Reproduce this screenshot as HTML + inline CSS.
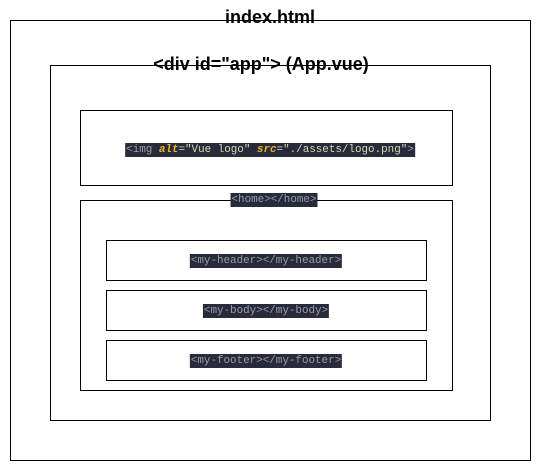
<!DOCTYPE html>
<html><head><meta charset="utf-8"><style>
body{margin:0;width:545px;height:471px;background:#fff;position:relative;overflow:hidden}
.b{position:absolute;border:1px solid #000;box-sizing:border-box}
.t{position:absolute;font:bold 18px "Liberation Sans",sans-serif;color:#000;white-space:nowrap;transform:translateX(-50%)}
.c{position:absolute;font:10.9px/14px "Liberation Mono",monospace;background:#282b3a;color:#9a9ca6;white-space:nowrap;transform:translateX(-50%);padding:0 1px}
.y{color:#e6b422;font-style:italic;font-weight:bold}.g{color:#d8d8b8}.w{color:#d8d8d8}
</style></head><body>
<div class="b" style="left:10px;top:20px;width:521px;height:441px"></div>
<div class="b" style="left:50px;top:65px;width:441px;height:356px"></div>
<div class="b" style="left:80px;top:110px;width:373px;height:76px"></div>
<div class="b" style="left:80px;top:200px;width:373px;height:191px"></div>
<div class="b" style="left:106px;top:240px;width:321px;height:41px"></div>
<div class="b" style="left:106px;top:290px;width:321px;height:41px"></div>
<div class="b" style="left:106px;top:340px;width:321px;height:41px"></div>
<div class="t" style="left:270px;top:7px">index.html</div>
<div class="t" style="left:261px;top:54px">&lt;div id="app"&gt; (App.vue)</div>
<div class="c" style="left:270px;top:143px">&lt;img <span class="y">alt</span><span class="w">=</span><span class="g">"Vue logo"</span> <span class="y">src</span><span class="w">=</span><span class="g">"./assets/logo.png"</span>&gt;</div>
<div class="c" style="left:274px;top:193px">&lt;home&gt;&lt;/home&gt;</div>
<div class="c" style="left:266px;top:254px">&lt;my-header&gt;&lt;/my-header&gt;</div>
<div class="c" style="left:266px;top:304px">&lt;my-body&gt;&lt;/my-body&gt;</div>
<div class="c" style="left:266px;top:354px">&lt;my-footer&gt;&lt;/my-footer&gt;</div>
</body></html>
